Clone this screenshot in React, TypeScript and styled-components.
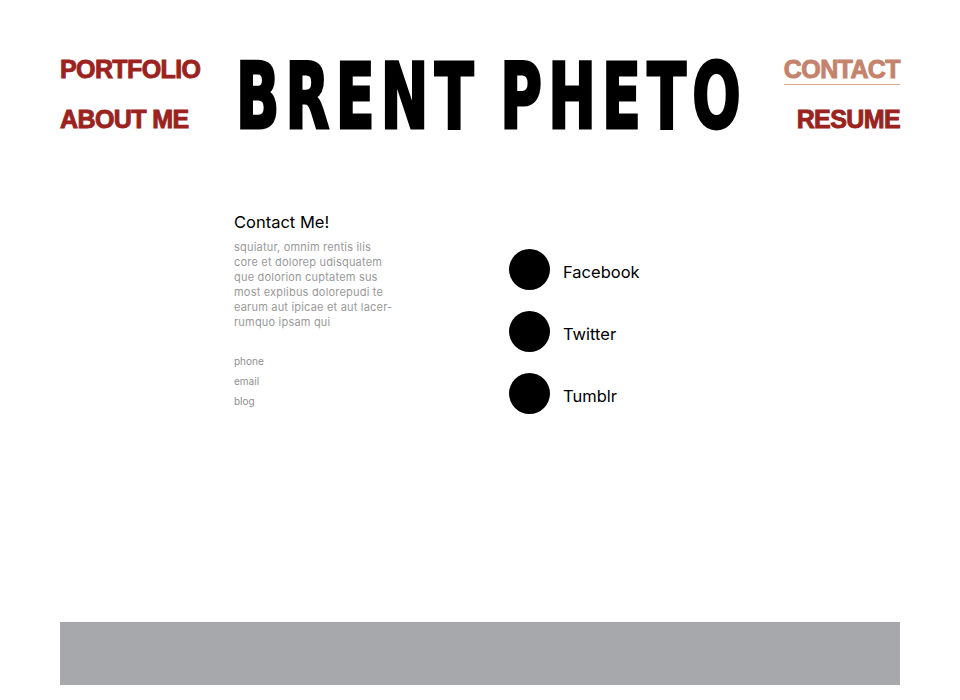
import React from 'react'
import styled, { createGlobalStyle } from 'styled-components'

const GlobalStyle = createGlobalStyle`
  body{
    margin:0;
    background:#fff;
    font-family:Inter, "Liberation Sans", Arial, sans-serif;
  }
`

const Page = styled.div`
  width:960px;
  height:700px;
  display:flex;
  flex-direction:column;
`

const Header = styled.header`
  display:flex;
  justify-content:space-between;
  align-items:flex-start;
  padding:52px 60px 0 60px;
  height:120px;
`

const NavColumn = styled.nav<{ $align: 'left' | 'right' }>`
  display:flex;
  flex-direction:column;
  align-items:${p => (p.$align === 'left' ? 'flex-start' : 'flex-end')};
  gap:19px;
  padding-top:2px;
`

const NavLink = styled.a<{ $active?: boolean }>`
  font-family:"Liberation Sans", Arial, sans-serif;
  font-weight:700;
  font-size:25px;
  line-height:30px;
  letter-spacing:-0.6px;
  color:${p => (p.$active ? '#c4836c' : '#9a2320')};
  text-decoration:none;
  border-bottom:${p => (p.$active ? '1.5px solid #d6a593' : '1.5px solid transparent')};
  -webkit-text-stroke:0.9px currentColor;
  cursor:pointer;
`

const Title = styled.h1`
  margin:0;
  width:504px;
  height:100px;
  overflow:visible;
`

const TitleText = styled.span`
  display:inline-block;
  margin-left:-4px;
  font-family:"DejaVu Sans Condensed", "DejaVu Sans", sans-serif;
  font-weight:700;
  font-size:91px;
  line-height:89px;
  letter-spacing:9px;
  word-spacing:-8px;
  color:#000;
  transform:scaleX(0.695);
  transform-origin:left top;
  white-space:nowrap;
  -webkit-text-stroke:3px #000;
`

const Main = styled.main`
  flex:1;
  display:grid;
  grid-template-columns:275px 1fr;
  padding:40px 0 0 234px;
`

const Info = styled.section`
  display:flex;
  flex-direction:column;
`

const Heading = styled.h2`
  margin:0 0 8px 0;
  font-weight:400;
  font-size:16.5px;
  line-height:20px;
  color:#000;
`

const Blurb = styled.p`
  margin:0;
  font-size:11px;
  line-height:15px;
  letter-spacing:0.2px;
  color:#999;
  white-space:nowrap;
`

const ContactList = styled.ul`
  list-style:none;
  margin:24px 0 0 0;
  padding:0;
  display:flex;
  flex-direction:column;
  gap:6px;
`

const ContactItem = styled.li`
  font-size:10px;
  line-height:14px;
  color:#8e8e8e;
`

const Social = styled.ul`
  list-style:none;
  margin:0;
  padding:37px 0 0 0;
  display:flex;
  flex-direction:column;
  gap:21px;
`

const SocialRow = styled.li`
  display:flex;
  align-items:center;
  gap:13px;
  height:41px;
`

const Dot = styled.span`
  width:41px;
  height:41px;
  border-radius:50%;
  background:#000;
  flex:none;
`

const SocialLabel = styled.span`
  font-size:16.5px;
  font-weight:400;
  color:#000;
  margin-top:5px;
`

const Footer = styled.footer`
  margin:0 60px 15px 60px;
  height:63px;
  background:#a7a8ab;
`

const blurbLines = [
  'squiatur, omnim rentis ilis',
  'core et dolorep udisquatem',
  'que dolorion cuptatem sus',
  'most explibus dolorepudi te',
  'earum aut ipicae et aut lacer-',
  'rumquo ipsam qui',
]

const socials = ['Facebook', 'Twitter', 'Tumblr']

const App: React.FC = () => {
  return (
    <>
      <GlobalStyle />
      <Page>
        <Header>
          <NavColumn $align='left'>
            <NavLink>PORTFOLIO</NavLink>
            <NavLink>ABOUT ME</NavLink>
          </NavColumn>
          <Title><TitleText>BRENT PHETO</TitleText></Title>
          <NavColumn $align='right'>
            <NavLink $active>CONTACT</NavLink>
            <NavLink>RESUME</NavLink>
          </NavColumn>
        </Header>
        <Main>
          <Info>
            <Heading>Contact Me!</Heading>
            <Blurb>
              {blurbLines.map((l, i) => (
                <React.Fragment key={i}>{l}{i < blurbLines.length - 1 && <br />}</React.Fragment>
              ))}
            </Blurb>
            <ContactList>
              <ContactItem>phone</ContactItem>
              <ContactItem>email</ContactItem>
              <ContactItem>blog</ContactItem>
            </ContactList>
          </Info>
          <Social>
            {socials.map(s => (
              <SocialRow key={s}>
                <Dot />
                <SocialLabel>{s}</SocialLabel>
              </SocialRow>
            ))}
          </Social>
        </Main>
        <Footer />
      </Page>
    </>
  )
}

export default App
